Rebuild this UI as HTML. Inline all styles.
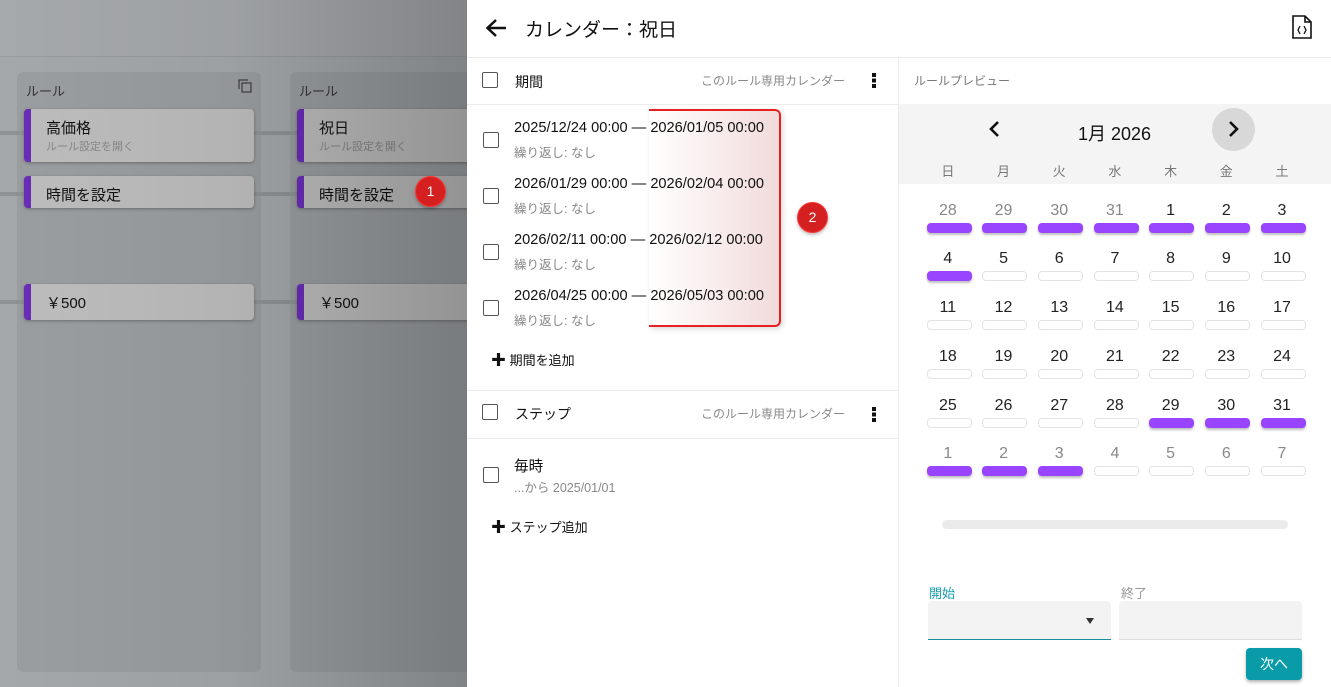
<!DOCTYPE html>
<html><head><meta charset="utf-8"><style>
*{box-sizing:border-box;margin:0;padding:0}
body{width:1331px;height:687px;overflow:hidden;position:relative;font-family:"Liberation Sans","Noto Sans CJK JP",sans-serif;background:#a4a8ab}
.abs{position:absolute}
.top{left:0;top:0;width:467px;height:57px;background:#a6a9ac;border-bottom:1px solid #999c9f}
.col{top:72px;width:244px;height:600px;background:#9a9ea1;border-radius:6px}
.col .t{position:absolute;left:9px;top:9px;font-size:13px;color:#333}
.line{height:4px;background:#8f9396}
.card{background:#bdbdbd;border-radius:4px;border-left:7px solid #6a2cb8;box-shadow:0 1px 3px rgba(0,0,0,.3);width:230px}
.card .a{position:absolute;left:15px;font-size:15px;color:#111}
.card .b{position:absolute;left:15px;top:29px;font-size:11px;color:#888}
.shade{left:0;top:0;width:467px;height:687px;background:linear-gradient(90deg,rgba(0,0,0,0) 0%,rgba(0,0,0,0.05) 50%,rgba(0,0,0,0.22) 100%)}
.drawer{left:467px;top:0;width:864px;height:687px;background:#fff}
.cb{width:16px;height:16px;border:1.5px solid #555;border-radius:2px;position:absolute}
.sep{height:1px;background:#ececec;position:absolute}
.dt{position:absolute;left:47px;font-size:14.6px;color:#111}
.rp{position:absolute;left:47px;font-size:12.5px;color:#888}
.cal{position:absolute;left:920px;width:390px;display:flex}
.cal div{width:55.7px;text-align:center;font-size:16px;color:#222;position:relative;height:40px}
.cal div.g{color:#888}
.cal div::after{content:"";position:absolute;left:6.5px;top:21px;width:43px;height:8px;border-radius:4px;border:1px solid #e3e3e3;background:#fff}
.cal div.p::after{background:#9945ff;border-color:#9945ff;box-shadow:0 2px 2px rgba(0,0,0,.25)}
.dots{position:absolute;width:4px;height:15px;background:repeating-linear-gradient(#111 0 4px,transparent 4px 5.5px)}
</style></head><body>
<div class="abs top"></div>
<div class="abs col" style="left:17px"><div class="t">ルール</div>
<svg class="abs" style="left:221px;top:7px" width="14" height="14" viewBox="0 0 14 14" fill="none" stroke="#444" stroke-width="1.3"><rect x="4" y="4" width="9" height="9"/><path d="M1 10V1h9"/></svg></div>
<div class="abs col" style="left:290px;width:200px"><div class="t">ルール</div></div>
<div class="abs line" style="left:0;top:131px;width:467px"></div>
<div class="abs line" style="left:0;top:192px;width:467px"></div>
<div class="abs line" style="left:0;top:300px;width:467px"></div>
<div class="abs card" style="left:24px;top:109px;height:53px"><div class="a" style="top:8px">高価格</div><div class="b">ルール設定を開く</div></div>
<div class="abs card" style="left:24px;top:176px;height:32px"><div class="a" style="top:8px">時間を設定</div></div>
<div class="abs card" style="left:24px;top:284px;height:36px"><div class="a" style="top:8px">￥500</div></div>
<div class="abs card" style="left:297px;top:109px;height:53px"><div class="a" style="top:8px">祝日</div><div class="b">ルール設定を開く</div></div>
<div class="abs card" style="left:297px;top:176px;height:32px"><div class="a" style="top:8px">時間を設定</div></div>
<div class="abs card" style="left:297px;top:284px;height:36px"><div class="a" style="top:8px">￥500</div></div>
<div class="abs shade"></div>
<div class="abs" style="left:416px;top:177px;width:29px;height:29px;border-radius:50%;background:#d42020;color:#fff;font-size:14px;text-align:center;line-height:29px;box-shadow:0 0 0 1px #f33,0 2px 4px rgba(0,0,0,.4)">1</div>

<div class="abs drawer">
<svg class="abs" style="left:18px;top:18px" width="22" height="20" viewBox="0 0 22 20"><path d="M21 10H3M11 2L2.5 10 11 18" fill="none" stroke="#111" stroke-width="2.5"/></svg>
<div class="abs" style="left:58px;top:15px;font-size:19px;color:#111">カレンダー：祝日</div>
<svg class="abs" style="left:825px;top:15px" width="20" height="24" viewBox="0 0 20 24" fill="none" stroke="#111" stroke-width="1.6"><path d="M1 1h12l6 6v16H1z"/><path d="M13 1v6h6"/><path d="M8 11l-2 4 2 4M12 11l2 4-2 4" stroke-width="1.3"/></svg>
<div class="sep" style="left:0;top:57px;width:864px"></div>
<div class="abs" style="left:431px;top:57px;width:1px;height:630px;background:#ececec"></div>
<div class="cb" style="left:15px;top:72px"></div>
<div class="abs" style="left:48px;top:72px;font-size:14px;color:#111">期間</div>
<div class="abs" style="left:234px;top:72px;font-size:12px;color:#888">このルール専用カレンダー</div>
<div class="dots" style="left:405px;top:73px"></div>
<div class="sep" style="left:0;top:104px;width:431px"></div>
<div class="abs" style="left:182px;top:109px;width:132px;height:218px;background:linear-gradient(90deg,rgba(245,220,220,0) 0%,rgba(240,210,210,.4) 50%,rgba(232,195,195,.6) 100%);border:2px solid #e82020;border-left:none;border-radius:0 6px 6px 0;box-shadow:2px 2px 6px rgba(0,0,0,.15)"></div>
<div class="cb" style="left:16px;top:132px"></div><div class="dt" style="top:120px">2025/12/24 00:00 — 2026/01/05 00:00</div><div class="rp" style="top:142px">繰り返し: なし</div>
<div class="cb" style="left:16px;top:188px"></div><div class="dt" style="top:176px">2026/01/29 00:00 — 2026/02/04 00:00</div><div class="rp" style="top:198px">繰り返し: なし</div>
<div class="cb" style="left:16px;top:244px"></div><div class="dt" style="top:232px">2026/02/11 00:00 — 2026/02/12 00:00</div><div class="rp" style="top:254px">繰り返し: なし</div>
<div class="cb" style="left:16px;top:300px"></div><div class="dt" style="top:288px">2026/04/25 00:00 — 2026/05/03 00:00</div><div class="rp" style="top:310px">繰り返し: なし</div>
<div class="abs" style="left:331px;top:203px;width:29px;height:29px;border-radius:50%;background:#d42020;color:#fff;font-size:14px;text-align:center;line-height:29px;box-shadow:0 0 0 1px #f33,0 2px 4px rgba(0,0,0,.4)">2</div>
<div class="abs" style="left:24px;top:349px;font-size:13px;color:#111"><b style="font-size:15px">✚</b> 期間を追加</div>
<div class="sep" style="left:0;top:390px;width:431px"></div>
<div class="cb" style="left:15px;top:404px"></div>
<div class="abs" style="left:48px;top:404px;font-size:14px;color:#111">ステップ</div>
<div class="abs" style="left:234px;top:405px;font-size:12px;color:#888">このルール専用カレンダー</div>
<div class="dots" style="left:405px;top:407px"></div>
<div class="sep" style="left:0;top:438px;width:431px"></div>
<div class="cb" style="left:16px;top:467px"></div><div class="dt" style="top:455px">毎時</div><div class="rp" style="top:477px">...から 2025/01/01</div>
<div class="abs" style="left:24px;top:516px;font-size:13px;color:#111"><b style="font-size:15px">✚</b> ステップ追加</div>

<div class="abs" style="left:447px;top:72px;font-size:12px;color:#777">ルールプレビュー</div>
<div class="abs" style="left:432px;top:104px;width:432px;height:80px;background:#f4f4f4"></div>
<svg class="abs" style="left:520px;top:120px" width="14" height="18" viewBox="0 0 14 18"><path d="M11 2L4 9l7 7" fill="none" stroke="#111" stroke-width="2.6"/></svg>
<div class="abs" style="left:611px;top:120px;font-size:18px;color:#111">1月 2026</div>
<div class="abs" style="left:745px;top:108px;width:43px;height:43px;border-radius:50%;background:#d8d8d8"></div>
<svg class="abs" style="left:760px;top:120px" width="14" height="18" viewBox="0 0 14 18"><path d="M3 2l7 7-7 7" fill="none" stroke="#111" stroke-width="2.6"/></svg>
</div>
<div class="abs" style="left:920px;top:161px;width:390px;display:flex;font-size:13px;color:#777">
<span style="width:55.7px;text-align:center">日</span><span style="width:55.7px;text-align:center">月</span><span style="width:55.7px;text-align:center">火</span><span style="width:55.7px;text-align:center">水</span><span style="width:55.7px;text-align:center">木</span><span style="width:55.7px;text-align:center">金</span><span style="width:55.7px;text-align:center">土</span></div>
<div class="cal" style="top:202px"><div class="g p">28</div><div class="g p">29</div><div class="g p">30</div><div class="g p">31</div><div class="p">1</div><div class="p">2</div><div class="p">3</div></div>
<div class="cal" style="top:250px"><div class="p">4</div><div>5</div><div>6</div><div>7</div><div>8</div><div>9</div><div>10</div></div>
<div class="cal" style="top:299px"><div>11</div><div>12</div><div>13</div><div>14</div><div>15</div><div>16</div><div>17</div></div>
<div class="cal" style="top:348px"><div>18</div><div>19</div><div>20</div><div>21</div><div>22</div><div>23</div><div>24</div></div>
<div class="cal" style="top:397px"><div>25</div><div>26</div><div>27</div><div>28</div><div class="p">29</div><div class="p">30</div><div class="p">31</div></div>
<div class="cal" style="top:445px"><div class="g p">1</div><div class="g p">2</div><div class="g p">3</div><div class="g">4</div><div class="g">5</div><div class="g">6</div><div class="g">7</div></div>
<div class="abs" style="left:942px;top:520px;width:346px;height:9px;border-radius:5px;background:#ebebeb"></div>
<div class="abs" style="left:929px;top:583px;font-size:13px;color:#1a9bb0">開始</div>
<div class="abs" style="left:1121px;top:583px;font-size:13px;color:#999">終了</div>
<div class="abs" style="left:928px;top:601px;width:183px;height:39px;background:#f3f3f3;border-radius:4px 4px 0 0;border-bottom:1.5px solid #1a8f9c"></div>
<div class="abs" style="left:1086px;top:618px;width:0;height:0;border-left:4px solid transparent;border-right:4px solid transparent;border-top:6px solid #333"></div>
<div class="abs" style="left:1119px;top:601px;width:183px;height:39px;background:#f3f3f3;border-radius:4px 4px 0 0;border-bottom:1px solid #ddd"></div>
<div class="abs" style="left:1246px;top:648px;width:56px;height:32px;background:#0a9ba8;border-radius:4px;color:#fff;font-size:14px;text-align:center;line-height:32px;box-shadow:0 2px 3px rgba(0,0,0,.3)">次へ</div>
</body></html>
